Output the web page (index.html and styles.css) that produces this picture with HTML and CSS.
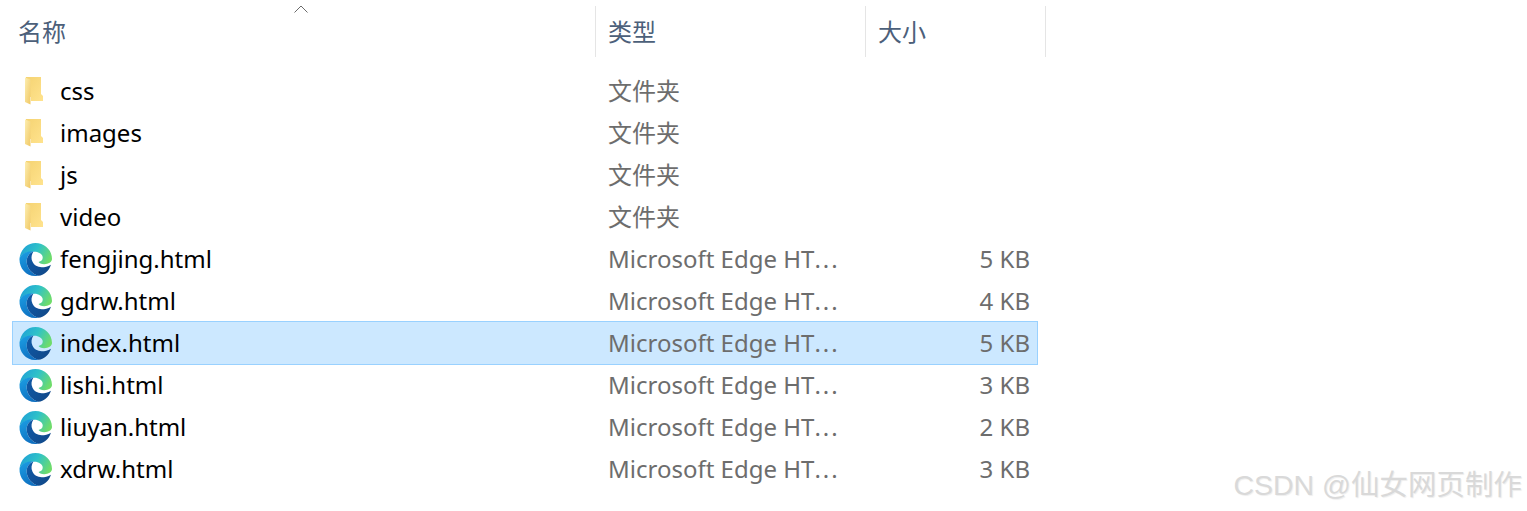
FILE: index.html
```html
<!DOCTYPE html>
<html lang="en">
<head>
    <meta charset="UTF-8">
    <meta name="viewport" content="width=device-width, initial-scale=1.0">
    <title>文件列表</title>
    <link rel="stylesheet" href="styles.css">
</head>
<body>
    <svg class="defs" width="0" height="0">
        <defs>
            <linearGradient id="folderFlap" x1="0" y1="0" x2="1" y2="1">
                <stop offset="0" stop-color="#fdeeb0"/>
                <stop offset="1" stop-color="#f0c865"/>
            </linearGradient>
            <linearGradient id="folderFront" x1="0" y1="0" x2="1" y2="1">
                <stop offset="0" stop-color="#f5d372"/>
                <stop offset="1" stop-color="#ffe38e"/>
            </linearGradient>
            <linearGradient id="edgeTop" x1="0" y1="0.2" x2="1" y2="0.6">
                <stop offset="0" stop-color="#1f9fd8"/>
                <stop offset="0.5" stop-color="#2fc2c8"/>
                <stop offset="1" stop-color="#6fdc6a"/>
            </linearGradient>
            <linearGradient id="edgeLeft" x1="0.2" y1="0" x2="0.6" y2="1">
                <stop offset="0" stop-color="#1b9de2"/>
                <stop offset="1" stop-color="#0f6fc0"/>
            </linearGradient>
            <linearGradient id="edgeDark" x1="0" y1="0" x2="1" y2="0.6">
                <stop offset="0" stop-color="#0f5aa8"/>
                <stop offset="1" stop-color="#114a8b"/>
            </linearGradient>
            <symbol id="folder" viewBox="0 0 18 28">
                <path d="M1 0H16V17L18 19V24H6V20H1Z" fill="url(#folderFront)"/>
                <path d="M0 0.500L5.500 2.500V27.500L0 25Z" fill="url(#folderFlap)"/>
            </symbol>
            <symbol id="edge" viewBox="0 0 32 32">
                <path d="M0.500 15C1.500 6 8 0 16 0C25 0 32 7 32 15.500C32 18.500 28.500 20.500 24.500 20.500C21.500 20.500 19.500 19.500 19 18.500C21.500 17.500 23 16.500 23 14C23 11 19 8.500 15 8.500C8 8.500 2 11 0.500 15Z" fill="url(#edgeTop)"/>
                <path d="M0.500 15C2 10.500 8 7.500 14 8C9.500 10 7 14 7.500 19C8 25 13 30.500 19 31.700C17.500 32 16.500 32 15.500 32C6.500 32 0 24 0.500 15Z" fill="url(#edgeLeft)"/>
                <path d="M14 8.300C12 11.500 11.500 15 13 18C14.500 21.500 18 23.500 22 23.500C25 23.500 28 23 31 21C29 27.500 24 31 19 31.700C13 30.500 8 25 7.500 19C7 14 9.500 10 14 8.300Z" fill="url(#edgeDark)"/>
            </symbol>
        </defs>
    </svg>

    <div class="header">
        <div class="col-head col-name">名称<svg class="sort-caret" width="14" height="8" viewBox="0 0 14 8"><path d="M0.500 7.500L7 1L13.500 7.500" fill="none" stroke="#6a6a6a"/></svg></div>
        <div class="col-head col-type">类型</div>
        <div class="col-head col-size">大小</div>
    </div>

    <div class="list">
        <div class="row"><div class="name"><svg class="icon-folder"><use href="#folder"/></svg>css</div><div class="type type-cjk">文件夹</div><div class="size"></div></div>
        <div class="row"><div class="name"><svg class="icon-folder"><use href="#folder"/></svg>images</div><div class="type type-cjk">文件夹</div><div class="size"></div></div>
        <div class="row"><div class="name"><svg class="icon-folder"><use href="#folder"/></svg>js</div><div class="type type-cjk">文件夹</div><div class="size"></div></div>
        <div class="row"><div class="name"><svg class="icon-folder"><use href="#folder"/></svg>video</div><div class="type type-cjk">文件夹</div><div class="size"></div></div>
        <div class="row"><div class="name"><svg class="icon-edge"><use href="#edge"/></svg>fengjing.html</div><div class="type">Microsoft Edge HT<span class="dots">...</span></div><div class="size">5 KB</div></div>
        <div class="row"><div class="name"><svg class="icon-edge"><use href="#edge"/></svg>gdrw.html</div><div class="type">Microsoft Edge HT<span class="dots">...</span></div><div class="size">4 KB</div></div>
        <div class="row selected"><div class="name"><svg class="icon-edge"><use href="#edge"/></svg>index.html</div><div class="type">Microsoft Edge HT<span class="dots">...</span></div><div class="size">5 KB</div></div>
        <div class="row"><div class="name"><svg class="icon-edge"><use href="#edge"/></svg>lishi.html</div><div class="type">Microsoft Edge HT<span class="dots">...</span></div><div class="size">3 KB</div></div>
        <div class="row"><div class="name"><svg class="icon-edge"><use href="#edge"/></svg>liuyan.html</div><div class="type">Microsoft Edge HT<span class="dots">...</span></div><div class="size">2 KB</div></div>
        <div class="row"><div class="name"><svg class="icon-edge"><use href="#edge"/></svg>xdrw.html</div><div class="type">Microsoft Edge HT<span class="dots">...</span></div><div class="size">3 KB</div></div>
    </div>

    <div class="watermark">CSDN @仙女网页制作</div>
</body>
</html>
```

FILE: styles.css
```css
body {
    font-family: "Noto Sans", "Noto Sans CJK SC", sans-serif;
    font-size: 24px;
    margin: 0;
    height: 511px;
    overflow: hidden;
    background-color: #fff;
    position: relative;
}
.defs {
    display: block;
}
.header {
    display: grid;
    grid-template-columns: 596px 270px 180px;
    width: 1046px;
    height: 51px;
    margin-top: 6px;
    margin-bottom: 13px;
}
.col-head {
    color: #4c607a;
    font-family: "Noto Sans CJK SC", sans-serif;
    line-height: 49px;
    padding-left: 12px;
    border-right: 1px solid #e5e5e5;
    position: relative;
}
.col-name {
    padding-left: 18px;
}
.sort-caret {
    position: absolute;
    left: 294px;
    top: -1px;
}
.list {
    margin-left: 13px;
    width: 1024px;
}
.row {
    display: grid;
    grid-template-columns: 595px 1fr 90px;
    box-sizing: border-box;
    height: 42px;
    padding-bottom: 2px;
    align-items: center;
}
.row.selected {
    background-color: #cce8ff;
    outline: 1px solid #99d1ff;
}
.name {
    display: flex;
    align-items: center;
    color: #000;
    white-space: nowrap;
}
.icon-folder {
    width: 18px;
    height: 28px;
    margin-top: 2px;
    margin-left: 12px;
    margin-right: 17px;
}
.icon-edge {
    width: 33px;
    height: 33px;
    margin-top: 2px;
    margin-left: 6px;
    margin-right: 8px;
}
.type {
    color: #6d6d6d;
    white-space: nowrap;
}
.type-cjk {
    padding-bottom: 2px;
}
.dots {
    letter-spacing: 2px;
}
.size {
    color: #6d6d6d;
    text-align: right;
    padding-right: 7px;
}
.watermark {
    position: absolute;
    right: 5px;
    top: 468px;
    font-family: "Liberation Sans", "Noto Sans CJK SC", sans-serif;
    font-size: 28.500px;
    line-height: 34px;
    color: #d9d9d9;
    text-shadow: 1px 1px 1px #eee;
    white-space: nowrap;
}
```
